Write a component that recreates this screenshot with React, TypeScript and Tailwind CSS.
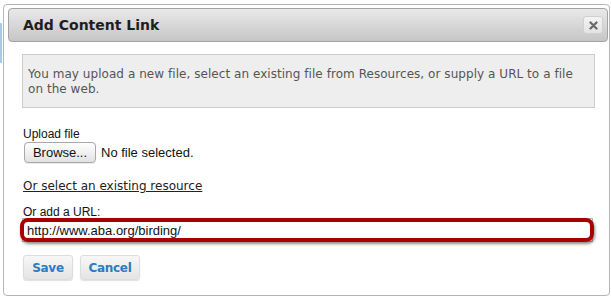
export default function App() {
  return (
    <div className="relative w-[611px] h-[296px] bg-white overflow-hidden">
      {/* bit of the page behind the dialog */}
      <div className="absolute left-0 top-[23px] w-[2px] h-[40px] bg-[#a9c9e4]" />

      <div className="ml-[3px] mt-[4px] w-[607px] h-[292px] border border-[#b5b5b5] rounded-[4px] bg-white pl-[4px] pr-[1px] pt-[3px]">
        {/* Title bar */}
        <div className="flex items-center justify-between h-[34px] border border-[#a3a3a3] rounded-[4px] bg-gradient-to-b from-[#e9e9e9] to-[#c6c6c6] pl-[14px] pr-[4px]">
          <span className="text-[14px] leading-[18px] font-bold text-[#1e1e1e] font-['DejaVu_Sans',sans-serif]">
            Add Content Link
          </span>
          <button
            type="button"
            className="flex items-center justify-center w-[20px] h-[18px] rounded-[3px] bg-gradient-to-b from-[#f3f3f3] to-[#e3e3e3] border border-[#d0d0d0]"
          >
            <svg width="9" height="9" viewBox="0 0 9 9">
              <path d="M1.5 1.5 L7.5 7.5 M7.5 1.5 L1.5 7.5" stroke="#6a6a6a" strokeWidth="2.3" strokeLinecap="round" />
            </svg>
          </button>
        </div>

        <div className="pl-[14px]">
          {/* Instructions */}
          <div className="mt-[12px] w-[573px] h-[54px] border border-[#cccccc] bg-[#eeeeee] pl-[5px] pr-[10px] pt-[12px]">
            <p className="text-[12px] leading-[15px] text-[#555555] font-['DejaVu_Sans',sans-serif] tracking-[0.05px]">
              You may upload a new file, select an existing file from Resources, or supply a URL to a file on the web.
            </p>
          </div>

          {/* Upload */}
          <div className="mt-[19px] ml-[1px] font-['Liberation_Sans',Arial,sans-serif] text-[#111]">
            <div className="text-[12px] leading-[14px]">Upload file</div>
            <div className="flex items-center h-[21px] mt-[1px] ml-[1px]">
              <button
                type="button"
                className="w-[72px] h-[21px] rounded-[4px] border border-[#a8a8a8] bg-gradient-to-b from-[#ffffff] to-[#e2e2e2] text-[13px] leading-[19px] text-[#111] shadow-[0_1px_0_rgba(0,0,0,0.08)]"
              >
                Browse...
              </button>
              <span className="ml-[5px] text-[13px] leading-[15px]">No file selected.</span>
            </div>
          </div>

          {/* Resource link */}
          <a className="block w-fit mt-[16px] ml-[1px] text-[12px] leading-[14px] text-[#222] underline font-['DejaVu_Sans',sans-serif]">
            Or select an existing resource
          </a>

          {/* URL */}
          <div className="mt-[13px] font-['Liberation_Sans',Arial,sans-serif]">
            <div className="ml-[1px] text-[12px] leading-[12px] text-[#111]">Or add a URL:</div>
            <div className="relative w-[571px] h-[24px] border border-[#b8b8b8] bg-white">
              <span className="absolute left-[4px] top-[4px] text-[13px] leading-[15px] text-[#111]">
                http://www.aba.org/birding/
              </span>
              {/* red highlight drawn over the field */}
              <div className="absolute -left-[3px] -top-[1px] w-[574px] h-[24px] rounded-[8px] border-[4px] border-[#a80000] shadow-[1px_2px_3px_rgba(0,0,0,0.45)]" />
            </div>
          </div>

          {/* Actions */}
          <div className="flex gap-[7px] mt-[13px] ml-[1px] font-['DejaVu_Sans',sans-serif]">
            <button
              type="button"
              className="w-[50px] h-[25px] rounded-[3px] border border-[#dddddd] bg-gradient-to-b from-[#f7f7f7] to-[#e4e4e4] text-[12px] font-bold text-[#2b7bc0] tracking-[-0.3px] shadow-[0_1px_1px_rgba(0,0,0,0.12)]"
            >
              Save
            </button>
            <button
              type="button"
              className="w-[60px] h-[25px] rounded-[3px] border border-[#dddddd] bg-gradient-to-b from-[#f7f7f7] to-[#e4e4e4] text-[12px] font-bold text-[#2b7bc0] tracking-[-0.3px] shadow-[0_1px_1px_rgba(0,0,0,0.12)]"
            >
              Cancel
            </button>
          </div>
        </div>
      </div>
    </div>
  );
}
